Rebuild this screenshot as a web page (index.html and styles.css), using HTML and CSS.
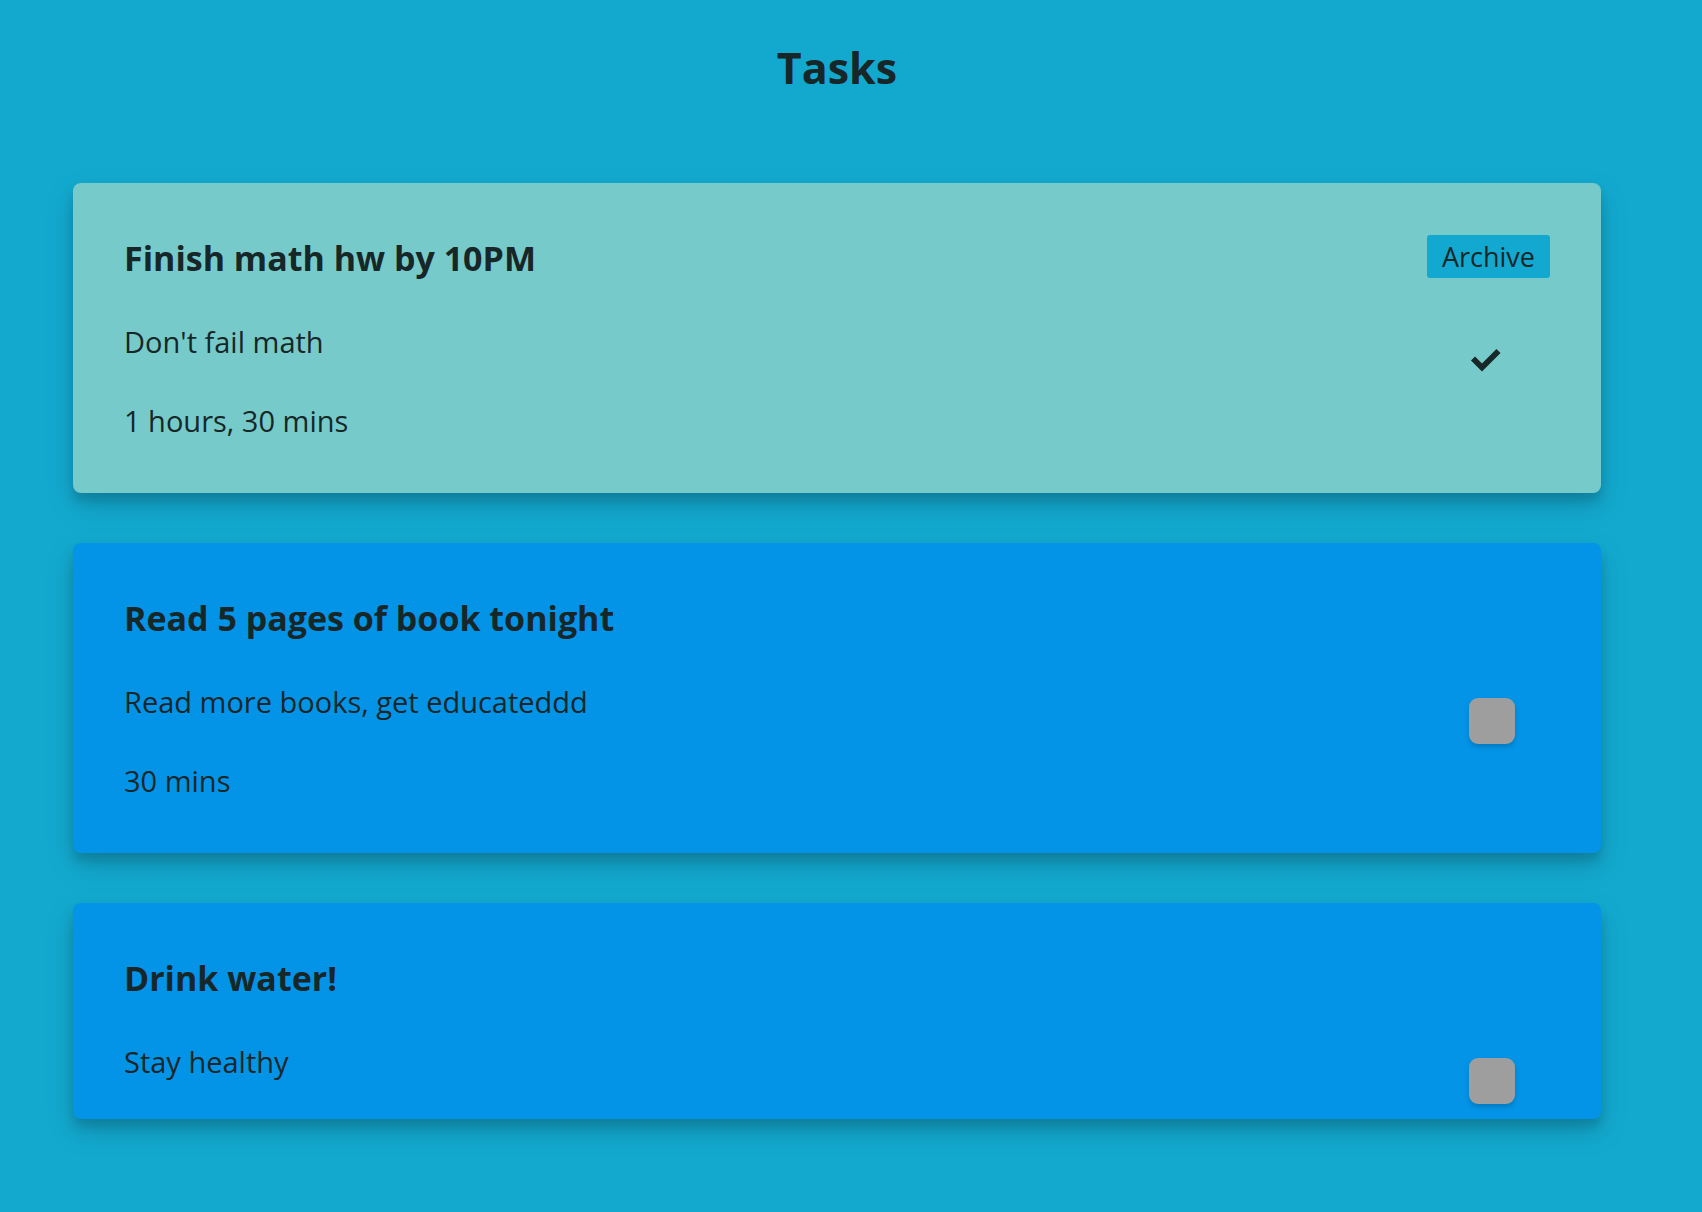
FILE: index.html
```html
<!DOCTYPE html>
<html lang="en">
<head>
<meta charset="utf-8">
<title>Tasks</title>
<link rel="stylesheet" href="styles.css">
</head>
<body>
<main class="page">
  <h1 class="page-title">Tasks</h1>
  <ul class="task-list">
    <li class="task task--done">
      <div class="task-info">
        <h2 class="task-title">Finish math hw by 10PM</h2>
        <p class="task-desc">Don't fail math</p>
        <p class="task-duration">1 hours, 30 mins</p>
      </div>
      <div class="task-actions">
        <button class="archive-btn" type="button">Archive</button>
        <div class="status status--done">
          <svg class="check-icon" viewBox="0 0 46 46" width="46" height="46" aria-hidden="true">
            <polyline points="7,20.5 16,29.5 32.5,13" fill="none" stroke="#182828" stroke-width="5.8" stroke-linecap="butt" stroke-linejoin="miter"/>
          </svg>
        </div>
      </div>
    </li>
    <li class="task">
      <div class="task-info">
        <h2 class="task-title">Read 5 pages of book tonight</h2>
        <p class="task-desc">Read more books, get educateddd</p>
        <p class="task-duration">30 mins</p>
      </div>
      <div class="task-actions">
        <button class="archive-btn archive-btn--hidden" type="button" tabindex="-1">Archive</button>
        <div class="status status--todo"></div>
      </div>
    </li>
    <li class="task">
      <div class="task-info">
        <h2 class="task-title">Drink water!</h2>
        <p class="task-desc">Stay healthy</p>
      </div>
      <div class="task-actions">
        <button class="archive-btn archive-btn--hidden" type="button" tabindex="-1">Archive</button>
        <div class="status status--todo"></div>
      </div>
    </li>
  </ul>
</main>
</body>
</html>
```

FILE: styles.css
```css
* {
  box-sizing: border-box;
}

html, body {
  margin: 0;
  padding: 0;
}

body {
  background: #13a9cf;
  color: #172728;
  font-family: "Open Sans", "Noto Sans", "Liberation Sans", sans-serif;
  min-height: 100vh;
}

.page {
  width: 1528px;
  margin-left: 73px;
  padding-top: 38px;
}

.page-title {
  margin: 0 0 85px;
  font-size: 43px;
  line-height: 60px;
  font-weight: 700;
  text-align: center;
}

.task-list {
  list-style: none;
  margin: 0;
  padding: 0;
  display: flex;
  flex-direction: column;
  gap: 50px;
}

.task {
  display: flex;
  justify-content: space-between;
  align-items: flex-start;
  padding: 52px 51px 15px 51px;
  background: #0394e8;
  border-radius: 8px;
  box-shadow: 0 12px 28px rgba(0, 0, 0, 0.17), 0 8px 10px rgba(0, 0, 0, 0.12);
}

.task--done {
  background: #76cbca;
}

.task-info {
  display: flex;
  flex-direction: column;
}

.task-title {
  margin: 3px 0 44px;
  font-size: 34px;
  line-height: 40px;
  font-weight: 700;
}

.task-desc,
.task-duration {
  margin: 0;
  font-size: 29px;
  line-height: 40px;
  font-weight: 400;
}

.task-duration {
  margin-top: 39px;
  margin-bottom: 37px;
}

.task-actions {
  width: 123px;
  display: flex;
  flex-direction: column;
  align-items: center;
}

.archive-btn {
  width: 123px;
  height: 43px;
  padding: 0;
  border: none;
  border-radius: 3px;
  background: #12a8d0;
  color: #172728;
  font-family: inherit;
  font-size: 27px;
  line-height: 43px;
  cursor: pointer;
}

.archive-btn--hidden {
  visibility: hidden;
}

.status {
  margin-top: 60px;
  width: 46px;
  height: 46px;
}

.status--todo {
  margin-left: 6px;
  background: #9e9e9e;
  border-radius: 9px;
  box-shadow: 0 3px 5px rgba(0, 0, 0, 0.18);
}

.check-icon {
  display: block;
}
```
